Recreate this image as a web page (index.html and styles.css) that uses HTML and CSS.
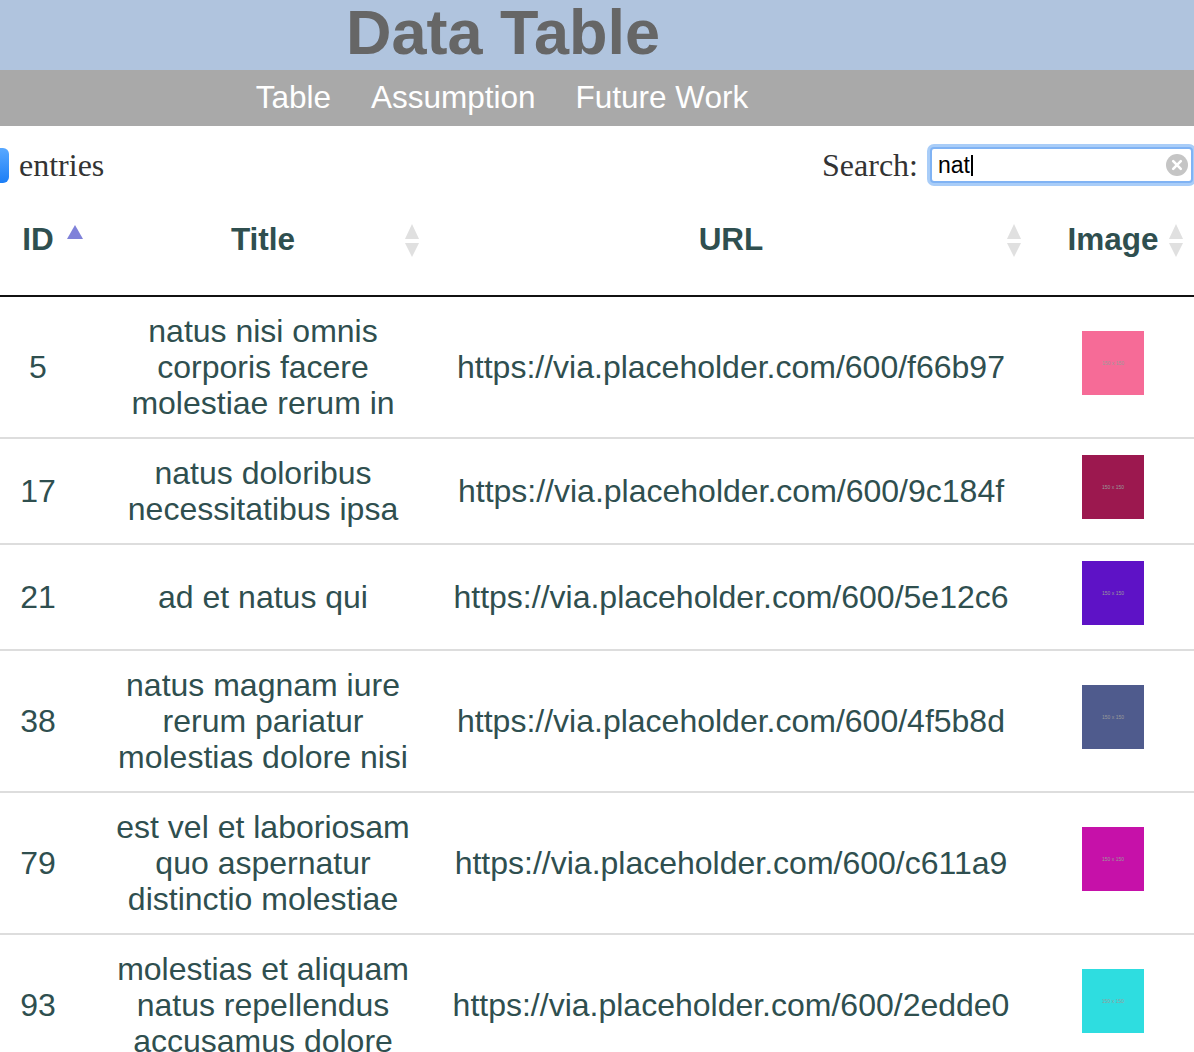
FILE: index.html
```html
<!DOCTYPE html>
<html lang="en">
<head>
<meta charset="utf-8">
<title>Data Table</title>
<link rel="stylesheet" href="styles.css">
</head>
<body>
<header class="masthead"><h1 class="title">Data Table</h1></header>
<nav class="nav"><a class="nav-link">Table</a><a class="nav-link">Assumption</a><a class="nav-link">Future Work</a></nav>
<main class="content">
  <div class="controls">
    <div class="length"><span class="select-stub"></span><span class="length-label">entries</span></div>
    <div class="search">
      <label class="search-label">Search:</label>
      <div class="search-box">
        <span class="search-text">nat</span><span class="caret"></span>
        <svg class="clear" width="22" height="22" viewBox="0 0 22 22"><circle cx="11" cy="11" r="11" fill="#c5c5c5"/><path d="M7.2 7.2 L14.8 14.8 M14.8 7.2 L7.2 14.8" stroke="#fff" stroke-width="2.6" stroke-linecap="round"/></svg>
      </div>
    </div>
  </div>
  <table class="data">
    <colgroup><col class="c-id"><col class="c-title"><col class="c-url"><col class="c-img"></colgroup>
    <thead>
      <tr><th class="sort-asc">ID</th><th class="sortable">Title</th><th class="sortable">URL</th><th class="sortable">Image</th></tr>
    </thead>
    <tbody>
      <tr><td>5</td><td class="t">natus nisi omnis corporis facere molestiae rerum in</td><td>https://via.placeholder.com/600/f66b97</td><td><span class="thumb" style="background:#f66b97">150 x 150</span></td></tr>
      <tr><td>17</td><td class="t">natus doloribus necessitatibus ipsa</td><td>https://via.placeholder.com/600/9c184f</td><td><span class="thumb" style="background:#9c184f">150 x 150</span></td></tr>
      <tr><td>21</td><td class="t">ad et natus qui</td><td>https://via.placeholder.com/600/5e12c6</td><td><span class="thumb" style="background:#5e12c6">150 x 150</span></td></tr>
      <tr><td>38</td><td class="t">natus magnam iure rerum pariatur molestias dolore nisi</td><td>https://via.placeholder.com/600/4f5b8d</td><td><span class="thumb" style="background:#4f5b8d">150 x 150</span></td></tr>
      <tr><td>79</td><td class="t">est vel et laboriosam quo aspernatur distinctio molestiae</td><td>https://via.placeholder.com/600/c611a9</td><td><span class="thumb" style="background:#c611a9">150 x 150</span></td></tr>
      <tr><td>93</td><td class="t">molestias et aliquam natus repellendus accusamus dolore</td><td>https://via.placeholder.com/600/2edde0</td><td><span class="thumb" style="background:#2edde0">150 x 150</span></td></tr>
    </tbody>
  </table>
</main>
</body>
</html>
```

FILE: styles.css
```css
html, body {
  margin: 0;
  padding: 0;
}
body {
  font-family: "Liberation Serif", "Times New Roman", serif;
  color: #333;
  background: #fff;
}
.masthead {
  background: #b0c4de;
  height: 70px;
  display: flex;
  justify-content: center;
  padding-right: 188px;
}
.title {
  margin: 0;
  font: bold 63px/64px "Liberation Sans", Arial, sans-serif;
  color: #666;
}
.nav {
  background: #a9a9a9;
  height: 56px;
  display: flex;
  justify-content: center;
  gap: 40px;
  padding-right: 190px;
  font: 31.5px/54px "Liberation Sans", Arial, sans-serif;
}
.nav-link {
  color: #fff;
  text-decoration: none;
}
.controls {
  display: flex;
  justify-content: space-between;
  align-items: center;
  height: 36px;
  margin-top: 21px;
  padding-right: 1px;
  font-size: 32px;
}
.length {
  display: flex;
  align-items: center;
}
.select-stub {
  width: 9px;
  height: 35px;
  margin-right: 10px;
  border-radius: 0 6px 6px 0;
  background: linear-gradient(#58a8ff, #1c7ef6);
}
.search {
  display: flex;
  align-items: center;
  gap: 12px;
}
.search-box {
  box-sizing: border-box;
  width: 263px;
  height: 36px;
  display: flex;
  align-items: center;
  padding: 0 3px 0 6px;
  background: #fff;
  border: 2px solid #80b3f4;
  border-radius: 4px;
  box-shadow: 0 0 0 3px #a9cdf8;
  font: 23px "Liberation Sans", Arial, sans-serif;
  color: #000;
}
.caret {
  width: 2px;
  height: 21px;
  margin-left: 1px;
  background: #000;
}
.clear {
  margin-left: auto;
  display: block;
}
.data {
  width: 1214px;
  margin: 18px 0 0 -20px;
  border-collapse: separate;
  border-spacing: 0;
  table-layout: fixed;
  font-family: "Liberation Sans", Arial, sans-serif;
  font-size: 32px;
  line-height: 36px;
  color: #2f4f4f;
}
.c-id { width: 116px; }
.c-title { width: 334px; }
.c-url { width: 602px; }
.c-img { width: 162px; }
.data th {
  position: relative;
  padding: 20px 10px 38px;
  font-weight: bold;
  font-size: 31.5px;
  text-align: center;
  border-bottom: 2px solid #111;
}
.data td {
  padding: 16px 10px;
  text-align: center;
  vertical-align: middle;
}
.data td.t {
  padding-left: 6px;
  padding-right: 6px;
}
.data tbody tr + tr td {
  border-top: 2px solid #ddd;
}
.sort-asc::after {
  content: "";
  position: absolute;
  right: 13px;
  top: 24px;
  border-left: 8px solid transparent;
  border-right: 8px solid transparent;
  border-bottom: 14px solid #7f81d9;
}
.sortable::before,
.sortable::after {
  content: "";
  position: absolute;
  right: 11px;
  border-left: 7px solid transparent;
  border-right: 7px solid transparent;
}
.sortable::before {
  top: 23px;
  border-bottom: 15px solid #e0e0e0;
}
.sortable::after {
  top: 42px;
  border-top: 14px solid #e0e0e0;
}
.thumb {
  display: inline-block;
  width: 62px;
  height: 64px;
  margin-bottom: 1px;
  overflow: hidden;
  vertical-align: baseline;
  font-size: 5px;
  line-height: 64px;
  color: #9a9a9a;
  text-align: center;
}
```
